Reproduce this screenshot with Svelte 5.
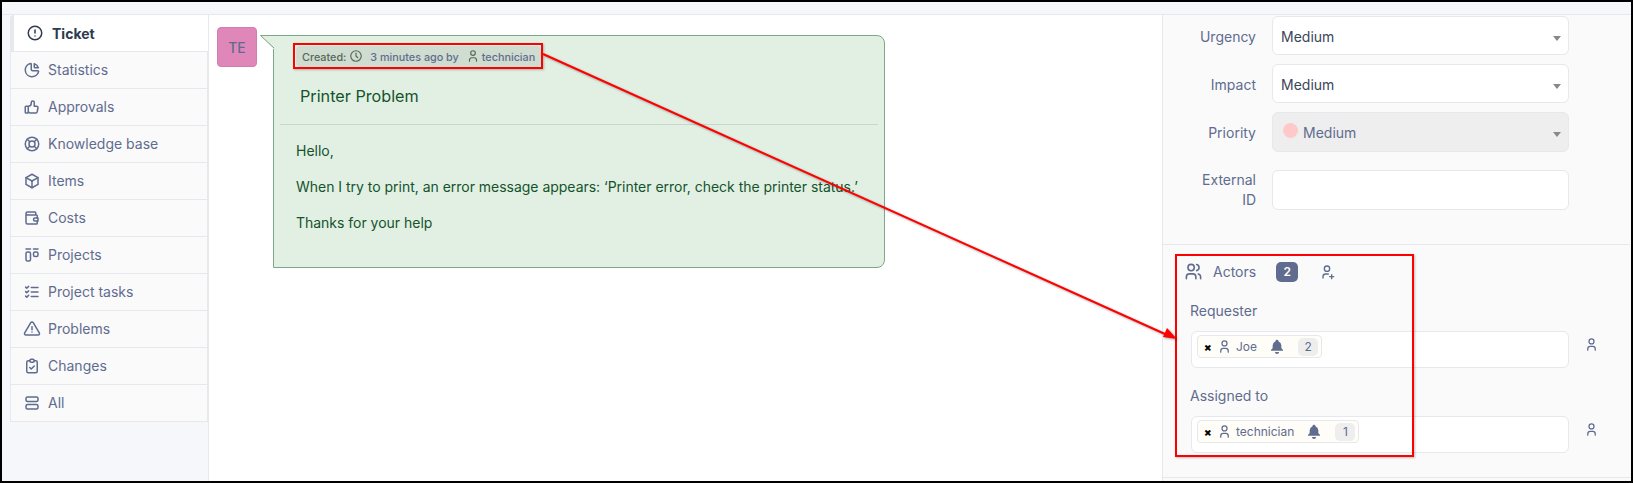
<script>
  const icons = {
    alert: ['M3 12a9 9 0 1 0 18 0a9 9 0 0 0 -18 0', 'M12 8v4', 'M12 16h.01'],
    pie: ['M10 3.2a9 9 0 1 0 10.8 10.8a1 1 0 0 0 -1 -1h-6.8a2 2 0 0 1 -2 -2v-7a.9 .9 0 0 0 -1 -.8', 'M15 3.5a9 9 0 0 1 5.5 5.5h-4.5a1 1 0 0 1 -1 -1v-4.5'],
    thumb: ['M7 11v8a1 1 0 0 1 -1 1h-2a1 1 0 0 1 -1 -1v-7a1 1 0 0 1 1 -1h3a4 4 0 0 0 4 -4v-1a2 2 0 0 1 4 0v5h3a2 2 0 0 1 2 2l-1 5a2 3 0 0 1 -2 2h-7a3 3 0 0 1 -3 -3'],
    buoy: ['M8 12a4 4 0 1 0 8 0a4 4 0 0 0 -8 0', 'M3 12a9 9 0 1 0 18 0a9 9 0 0 0 -18 0', 'M15 15l3.35 3.35', 'M9 15l-3.35 3.35', 'M5.65 5.65l3.35 3.35', 'M18.35 5.65l-3.35 3.35'],
    box: ['M12 3l8 4.5v9l-8 4.5l-8 -4.5v-9l8 -4.5', 'M12 12l8 -4.5', 'M12 12v9', 'M12 12l-8 -4.5'],
    wallet: ['M17 8v-3a1 1 0 0 0 -1 -1h-10a2 2 0 0 0 0 4h12a1 1 0 0 1 1 1v3m0 4v3a1 1 0 0 1 -1 1h-12a2 2 0 0 1 -2 -2v-12', 'M20 12v4h-4a2 2 0 0 1 0 -4h4'],
    kanban: ['M4 4h6', 'M14 4h6', 'M4 10a2 2 0 0 1 2 -2h2a2 2 0 0 1 2 2v8a2 2 0 0 1 -2 2h-2a2 2 0 0 1 -2 -2z', 'M14 10a2 2 0 0 1 2 -2h2a2 2 0 0 1 2 2v2a2 2 0 0 1 -2 2h-2a2 2 0 0 1 -2 -2z'],
    tasks: ['M3.5 5.5l1.5 1.5l2.5 -2.5', 'M3.5 11.5l1.5 1.5l2.5 -2.5', 'M3.5 17.5l1.5 1.5l2.5 -2.5', 'M11 6h9', 'M11 12h9', 'M11 18h9'],
    triangle: ['M12 9v4', 'M10.363 3.591l-8.106 13.534a1.914 1.914 0 0 0 1.636 2.871h16.214a1.914 1.914 0 0 0 1.636 -2.87l-8.106 -13.536a1.914 1.914 0 0 0 -3.274 0z', 'M12 16h.01'],
    clipboard: ['M9 5h-2a2 2 0 0 0 -2 2v12a2 2 0 0 0 2 2h10a2 2 0 0 0 2 -2v-12a2 2 0 0 0 -2 -2h-2', 'M9 5a2 2 0 0 1 2 -2h2a2 2 0 0 1 2 2a2 2 0 0 1 -2 2h-2a2 2 0 0 1 -2 -2', 'M9 14l2 2l4 -4'],
    rows: ['M4 6a2 2 0 0 1 2 -2h12a2 2 0 0 1 2 2v2a2 2 0 0 1 -2 2h-12a2 2 0 0 1 -2 -2z', 'M4 16a2 2 0 0 1 2 -2h12a2 2 0 0 1 2 2v2a2 2 0 0 1 -2 2h-12a2 2 0 0 1 -2 -2z'],
    clock: ['M3 12a9 9 0 1 0 18 0a9 9 0 0 0 -18 0', 'M12 7v5l3 3'],
    user: ['M8 7a4 4 0 1 0 8 0a4 4 0 0 0 -8 0', 'M6 21v-2a4 4 0 0 1 4 -4h4a4 4 0 0 1 4 4v2'],
    users: ['M5 7a4 4 0 1 0 8 0a4 4 0 1 0 -8 0', 'M3 21v-2a4 4 0 0 1 4 -4h4a4 4 0 0 1 4 4v2', 'M16 3.13a4 4 0 0 1 0 7.75', 'M21 21v-2a4 4 0 0 0 -3 -3.85'],
    userPlus: ['M8 7a4 4 0 1 0 8 0a4 4 0 0 0 -8 0', 'M16 19h6', 'M19 16v6', 'M6 21v-2a4 4 0 0 1 4 -4h4']
  };

  const tabs = [
    { label: 'Statistics', icon: 'pie' },
    { label: 'Approvals', icon: 'thumb' },
    { label: 'Knowledge base', icon: 'buoy' },
    { label: 'Items', icon: 'box' },
    { label: 'Costs', icon: 'wallet' },
    { label: 'Projects', icon: 'kanban' },
    { label: 'Project tasks', icon: 'tasks' },
    { label: 'Problems', icon: 'triangle' },
    { label: 'Changes', icon: 'clipboard' },
    { label: 'All', icon: 'rows' }
  ];

  const actors = [
    { role: 'Requester', name: 'Joe', count: 2 },
    { role: 'Assigned to', name: 'technician', count: 1 }
  ];
</script>

{#snippet icon(name, size)}
  <svg class="icon" width={size} height={size} viewBox="0 0 24 24" aria-hidden="true">
    {#each icons[name] as d}<path {d} />{/each}
  </svg>
{/snippet}

<div class="page">
  <aside class="sidebar">
    <ul class="tabs">
      <li class="tab active">{@render icon('alert', 18)}<span>Ticket</span></li>
      {#each tabs as tab}
        <li class="tab">{@render icon(tab.icon, 18)}<span>{tab.label}</span></li>
      {/each}
    </ul>
  </aside>

  <main class="timeline">
    <div class="avatar">TE</div>
    <article class="bubble">
      <svg class="tail" width="15" height="14" viewBox="0 0 15 14" aria-hidden="true">
        <path class="tail-fill" d="M0 .5H15V14H13.5z" />
        <path class="tail-line" d="M14 13L.5 .5H15" />
      </svg>
      <header class="meta">
        <span class="badge">
          <span>Created:</span>
          <span class="clock">{@render icon('clock', 14)}</span>
          <span class="when">3 minutes ago by</span>
          <span class="who">{@render icon('user', 14)}</span>
          <span class="when">technician</span>
        </span>
      </header>
      <h1>Printer Problem</h1>
      <div class="content">
        <p>Hello,</p>
        <p>When I try to print, an error message appears: ‘Printer error, check the printer status.’</p>
        <p>Thanks for your help</p>
      </div>
    </article>
  </main>

  <section class="panel">
    <div class="fields">
      <span class="label">Urgency</span>
      <div class="select">Medium</div>
      <span class="label">Impact</span>
      <div class="select">Medium</div>
      <span class="label">Priority</span>
      <div class="select disabled"><i class="dot"></i>Medium</div>
      <span class="label wrap">External ID</span>
      <div class="input"></div>
    </div>

    <div class="actors">
      <div class="actors-head">
        {@render icon('users', 19)}
        <span class="actors-title">Actors</span>
        <span class="count">2</span>
        <span class="add">{@render icon('userPlus', 16)}</span>
      </div>
      {#each actors as actor}
        <div class="actor">
          <div class="actor-label">{actor.role}</div>
          <div class="actor-row">
            <div class="actor-box">
              <span class="chip">
                <b class="remove">×</b>
                {@render icon('user', 15)}
                <span class="chip-name">{actor.name}</span>
                <svg class="bell" width="16" height="16" viewBox="0 0 24 24" aria-hidden="true">
                  <path d="M14.2 3.2a2.2 2.2 0 0 0 -4.4 0a7 7 0 0 0 -4.3 6.3v3.2a4 4 0 0 1 -2 3.1a1 1 0 0 0 .5 1.9h16a1 1 0 0 0 .5 -1.9a4 4 0 0 1 -2 -3.1v-3.2a7 7 0 0 0 -4.3 -6.3z" />
                  <path d="M9 19.5a3 3 0 0 0 6 0z" />
                </svg>
                <span class="chip-count">{actor.count}</span>
              </span>
            </div>
            <span class="actor-side">{@render icon('user', 15)}</span>
          </div>
        </div>
      {/each}
    </div>
  </section>

  <!-- annotations drawn on top of the screenshot -->
  <div class="mark mark-meta"></div>
  <div class="mark mark-actors"></div>
  <svg class="arrow" width="1633" height="483" viewBox="0 0 1633 483" aria-hidden="true">
    <line x1="543" y1="54" x2="1165" y2="334" />
    <path d="M1177 339L1163 337L1167 328z" />
  </svg>
</div>

<style>
  :global(body) {
    margin: 0;
  }

  .page {
    position: relative;
    box-sizing: border-box;
    width: 1633px;
    height: 483px;
    overflow: hidden;
    display: grid;
    grid-template-columns: 207px 953px 1fr;
    padding-top: 12px;
    border: 2px solid #000;
    background: #f5f7fb;
    font-family: Inter, "Noto Sans", sans-serif;
    font-size: 14px;
    color: #5f6c8f;
  }

  .icon {
    flex: none;
    fill: none;
    stroke: currentColor;
    stroke-width: 2;
    stroke-linecap: round;
    stroke-linejoin: round;
  }

  .sidebar {
    padding-left: 8px;
    border-right: 1px solid #e6e8ee;
    border-top: 1px solid #e6e8ee;
  }

  .tabs {
    list-style: none;
    margin: 0;
    padding: 0;
  }

  .tab {
    box-sizing: border-box;
    height: 37px;
    display: flex;
    align-items: center;
    gap: 7px;
    padding: 0 0 1px 12px;
    background: #fafafa;
    border: 1px solid #e6e8ee;
    border-top: 0;
  }

  .tab.active {
    gap: 8px;
    padding: 0 0 0 12px;
    border: 0;
    border-left: 4px solid #e6e8ee;
    border-bottom: 1px solid #e6e8ee;
    border-radius: 4px 0 0 0;
    background: #fff;
    color: #2f3a4f;
    font-weight: 700;
  }

  .timeline {
    display: flex;
    align-items: flex-start;
    gap: 16px;
    padding: 12px 0 0 8px;
    background: #fff;
    border-top: 1px solid #e6e8ee;
  }

  .avatar {
    box-sizing: border-box;
    flex: none;
    width: 40px;
    height: 40px;
    display: flex;
    align-items: center;
    justify-content: center;
    border: 1px solid #d47cae;
    border-radius: 4px;
    background: #e087b9;
    font-weight: 500;
  }

  .bubble {
    position: relative;
    box-sizing: border-box;
    width: 612px;
    height: 233px;
    margin-top: 8px;
    padding: 8px 6px 0;
    border: 1px solid #7fa686;
    border-radius: 0 8px 8px 0;
    background: #e2f0e3;
    color: #14532d;
  }

  .tail {
    position: absolute;
    top: -1px;
    left: -14px;
  }

  .tail-fill {
    fill: #e2f0e3;
  }

  .tail-line {
    fill: none;
    stroke: #7fa686;
  }

  .meta {
    padding-left: 16px;
    height: 25px;
    display: flex;
    align-items: center;
  }

  .badge {
    box-sizing: border-box;
    display: inline-flex;
    align-items: center;
    height: 21px;
    padding: 1px 6px 0;
    border-radius: 4px;
    background: #cfdccf;
    color: #56685c;
    font-size: 10.8px;
    font-weight: 500;
    white-space: nowrap;
  }

  .clock {
    display: flex;
    margin: -2px 7px 0 3px;
  }

  .who {
    display: flex;
    margin: -2px 2px 0 7px;
  }

  .when {
    color: #5f6c8f;
  }

  h1 {
    margin: 17px 0 0;
    padding: 0 0 18px 20px;
    border-bottom: 1px solid #c5d8cb;
    font-size: 16.2px;
    font-weight: 400;
    line-height: 20px;
  }

  .content {
    padding: 17px 0 0 16px;
    font-size: 14px;
    line-height: 17px;
    letter-spacing: -.02px;
  }

  p {
    margin: 0 0 19px;
  }

  .panel {
    background: #fafafa;
    border-left: 1px solid #e6e8ee;
    border-top: 1px solid #e6e8ee;
  }

  .fields {
    box-sizing: border-box;
    height: 230px;
    padding-top: 1px;
    margin-right: 1px;
    display: grid;
    grid-template-columns: 93px 297px;
    grid-template-rows: 39px 39px 40px 49px;
    gap: 9px 16px;
    border-bottom: 1px solid #e6e8ee;
  }

  .label {
    padding-top: 11px;
    text-align: right;
    line-height: 20px;
  }

  .label.wrap {
    padding: 9px 0 0 30px;
  }

  .select,
  .input {
    box-sizing: border-box;
    position: relative;
    display: flex;
    align-items: center;
    padding: 2px 0 0 8px;
    border: 1px solid #e6e8ee;
    border-radius: 6px;
    background: #fff;
    color: #3a4558;
  }

  .input {
    margin-top: 9px;
  }

  .select::after {
    content: '';
    position: absolute;
    right: 7px;
    top: 19px;
    border: 4px solid transparent;
    border-top: 5px solid #888;
    border-bottom: 0;
  }

  .select.disabled {
    padding-top: 1px;
    background: #eee;
    color: #5f6c8f;
  }

  .dot {
    width: 15px;
    height: 15px;
    margin: -4px 5px 0 2px;
    border-radius: 50%;
    background: #ffc9c9;
  }

  .actors {
    box-sizing: border-box;
    height: 233px;
    padding: 17px 0 0 13px;
    border-bottom: 1px solid #e6e8ee;
  }

  .actors-head {
    height: 19px;
    display: flex;
    align-items: center;
    margin-left: 8px;
  }

  .actors-title {
    margin-left: 10px;
  }

  .count {
    width: 22px;
    height: 20px;
    margin-left: 20px;
    display: flex;
    align-items: center;
    justify-content: center;
    border-radius: 5px;
    background: #5f6c8f;
    color: #fff;
    font-size: 12px;
    font-weight: 600;
  }

  .add {
    display: flex;
    margin-left: 21px;
  }

  .actor-label {
    margin: 21px 0 12px 14px;
    line-height: 17px;
  }

  .actor + .actor .actor-label {
    margin-top: 19px;
  }

  .actor-row {
    display: flex;
    align-items: flex-start;
    gap: 15px;
    margin-left: 15px;
  }

  .actor-box {
    box-sizing: border-box;
    width: 378px;
    height: 37px;
    padding: 3px 5px;
    border: 1px solid #e6e8ee;
    border-radius: 6px;
    background: #fff;
  }

  .chip {
    box-sizing: border-box;
    display: inline-flex;
    align-items: center;
    height: 23px;
    padding: 0 3px 0 6px;
    border: 1px solid #e6e8ee;
    border-radius: 4px;
    background: #fffdf8;
    font-size: 12px;
  }

  .remove {
    width: 10px;
    margin-right: 3px;
    color: #000;
    font-size: 11px;
    font-weight: 900;
  }

  .chip-name {
    margin-left: 4px;
  }

  .bell {
    margin-left: 12px;
    fill: #5f6c8f;
  }

  .chip-count {
    width: 20px;
    height: 18px;
    margin-left: 13px;
    display: flex;
    align-items: center;
    justify-content: center;
    border-radius: 5px;
    background: #eee;
  }

  .actor-side {
    display: flex;
    margin-top: 6px;
  }

  /* red annotation boxes over the ui */
  .mark {
    position: absolute;
    box-sizing: border-box;
    border: 2px solid #f00;
    box-shadow: 1px 1px 2px rgba(0, 0, 0, .25);
  }

  .mark-meta {
    left: 291px;
    top: 41px;
    width: 250px;
    height: 26px;
  }

  .mark-actors {
    left: 1173px;
    top: 252px;
    width: 239px;
    height: 203px;
  }

  .arrow {
    position: absolute;
    left: -2px;
    top: -2px;
    pointer-events: none;
    filter: drop-shadow(1px 1px 1px rgba(0, 0, 0, .35));
  }

  .arrow line {
    stroke: #f00;
    stroke-width: 2;
  }

  .arrow path {
    fill: #f00;
  }
</style>
